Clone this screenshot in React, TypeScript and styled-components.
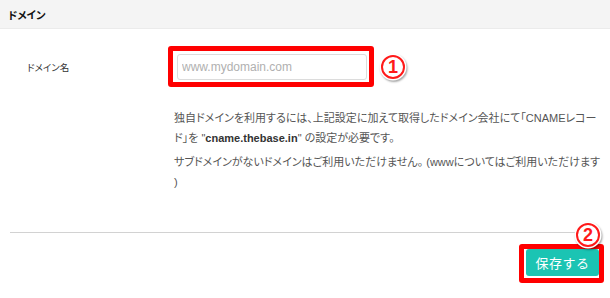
import React from 'react'
import styled, { createGlobalStyle } from 'styled-components'

const GlobalStyle = createGlobalStyle`
    html, body {
        margin: 0;
        padding: 0;
        background: #fff;
    }
    body {
        font-family: "Liberation Sans", "Noto Sans CJK JP", sans-serif;
        font-feature-settings: "palt";
        color: #333;
    }
`

const Page = styled.div`
    width: 610px;
    height: 298px;
    overflow: hidden;
    display: flex;
    flex-direction: column;
`

const Header = styled.div`
    height: 28px;
    display: flex;
    align-items: center;
    padding-left: 8px;
    background: #f4f4f4;
    border-bottom: 1px solid #ebebeb;
    font-size: 10.5px;
    font-weight: bold;
    color: #111;
`

const Body = styled.div`
    padding: 17px 10px 0 10px;
`

const FieldRow = styled.div`
    display: grid;
    grid-template-columns: 158px 1fr;
    align-items: center;
`

const Label = styled.div`
    padding-left: 17px;
    font-size: 9.5px;
    color: #333;
`

const FieldWrap = styled.div`
    display: flex;
    align-items: center;
    gap: 7px;
`

const Highlight = styled.div`
    border: 5px solid #ff0000;
    border-radius: 3px;
    padding: 3px 2px 2px 4px;
    display: flex;
    position: relative;
`

const Input = styled.input`
    width: 190px;
    height: 26px;
    box-sizing: border-box;
    border: 1px solid #dcdcdc;
    border-radius: 3px;
    padding: 0 0 0 4px;
    font-family: "Liberation Sans", sans-serif;
    font-size: 12px;
    outline: none;
    &::placeholder {
        color: #b0b0b0;
    }
`

const Marker = styled.span<{ $top?: number; $right?: number }>`
    width: 20px;
    height: 20px;
    flex: none;
    border-radius: 50%;
    border: 2.5px solid #ff1a1a;
    background: #fff;
    color: #ff1a1a;
    font-family: "Liberation Sans", sans-serif;
    font-size: 18px;
    font-weight: bold;
    display: flex;
    align-items: center;
    justify-content: center;
    line-height: 1;
    box-shadow: 0 0 0 1.5px #fff, 1px 1.5px 2px 1.5px rgba(0, 0, 0, 0.35);
    ${p => p.$top !== undefined && `
        position: absolute;
        top: ${p.$top}px;
        right: ${p.$right}px;
    `}
`

const Notes = styled.div`
    margin: 21px -10px 0 164px;
    font-size: 11px;
    line-height: 20px;
    color: #555;
    white-space: nowrap;
`

const Note = styled.p`
    margin: 0 0 4px 0;
`

const Strong = styled.b`
    color: #333;
`

const Divider = styled.hr`
    margin: 36px 10px 0 10px;
    border: none;
    border-top: 1px solid #d2d2d2;
`

const Footer = styled.div`
    display: flex;
    justify-content: flex-end;
    padding: 11px 6px 0 0;
`

const ButtonBox = styled(Highlight)`
    padding: 0 0 2px 2px;
`

const SaveButton = styled.button`
    width: 73px;
    height: 27px;
    border: none;
    border-radius: 3px;
    background: #1bc4b3;
    color: #fff;
    font-family: "Noto Sans CJK JP", sans-serif;
    font-size: 13px;
    letter-spacing: 0.5px;
    cursor: pointer;
`

export default function App() {
    return (
        <>
            <GlobalStyle />
            <Page>
                <Header>ドメイン</Header>
                <Body>
                    <FieldRow>
                        <Label>ドメイン名</Label>
                        <FieldWrap>
                            <Highlight>
                                <Input placeholder="www.mydomain.com" />
                            </Highlight>
                            <Marker>1</Marker>
                        </FieldWrap>
                    </FieldRow>
                    <Notes>
                        <Note>
                            独自ドメインを利用するには、上記設定に加えて取得したドメイン会社にて「CNAMEレコー<br />
                            ド」を "<Strong>cname.thebase.in</Strong>" の設定が必要です。
                        </Note>
                        <Note>
                            サブドメインがないドメインはご利用いただけません。 (wwwについてはご利用いただけます<br />
                            )
                        </Note>
                    </Notes>
                </Body>
                <Divider />
                <Footer>
                    <ButtonBox>
                        <SaveButton>保存する</SaveButton>
                        <Marker $top={-26} $right={-1}>2</Marker>
                    </ButtonBox>
                </Footer>
            </Page>
        </>
    )
}
